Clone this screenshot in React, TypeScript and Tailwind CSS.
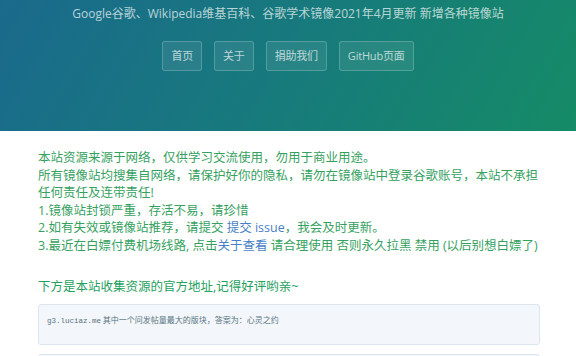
import React from 'react';

const navLinks = ['首页', '关于', '捐助我们', 'GitHub页面'];

export default function App() {
  return (
    <div className="w-[576px] h-[356px] overflow-hidden bg-white font-['Open_Sans','Noto_Sans_CJK_SC',sans-serif]">
      {/* Header */}
      <header className="h-[131px] bg-[linear-gradient(120deg,#1a6a8c_0%,#177a7c_50%,#158b66_100%)] flex flex-col items-center">
        <h2 className="mt-[5px] text-[12px] leading-[17px] text-white/70">
          Google谷歌、Wikipedia维基百科、谷歌学术镜像2021年4月更新 新增各种镜像站
        </h2>
        <nav className="mt-[19px] flex gap-[12px]">
          {navLinks.map((label) => (
            <a
              key={label}
              className="h-[30px] px-[8px] flex items-center rounded-[3px] border border-white/20 bg-white/[0.08] text-[11px] tracking-[-0.2px] text-white/70"
            >
              {label}
            </a>
          ))}
        </nav>
      </header>

      {/* Main content */}
      <main className="pl-[38px] pr-[36px] pt-[18px]">
        <div className="text-[12.5px] leading-[17.6px] text-[#36a15f] whitespace-nowrap">
          <div>本站资源来源于网络，仅供学习交流使用，勿用于商业用途。</div>
          <div>所有镜像站均搜集自网络，请保护好你的隐私，请勿在镜像站中登录谷歌账号，本站不承担</div>
          <div>任何责任及连带责任!</div>
          <div>1.镜像站封锁严重，存活不易，请珍惜</div>
          <div>
            2.如有失效或镜像站推荐，请提交 <a className="text-[#4a7fc6]">提交 issue</a>，我会及时更新。
          </div>
          <div>
            3.最近在白嫖付费机场线路, 点击<a className="text-[#4a7fc6]">关于查看</a> 请合理使用 否则永久拉黑 禁用 (以后别想白嫖了)
          </div>
        </div>

        <h2 className="mt-[23px] text-[12.5px] leading-[18px] text-[#24a05e]">
          下方是本站收集资源的官方地址,记得好评哟亲~
        </h2>

        <div className="mt-[8px] h-[41px] rounded-[3px] border border-[#dce6f0] bg-[#f3f6fa] px-[8px] pt-[6px] text-[#567482] leading-[12px]">
          <code className="text-[7.5px] font-['Liberation_Mono',monospace]">g3.luciaz.me</code>
          <span className="text-[8px] font-['Noto_Sans_CJK_SC',sans-serif]"> 其中一个问发帖量最大的版块，答案为：心灵之约</span>
        </div>

        <div className="mt-[9px] h-[40px] rounded-[3px] border border-[#dce6f0] bg-[#f3f6fa]" />
      </main>
    </div>
  );
}
